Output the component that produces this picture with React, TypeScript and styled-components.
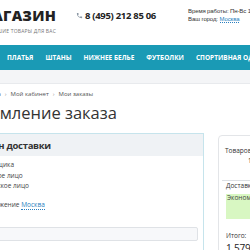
import styled, { createGlobalStyle } from 'styled-components';

const GlobalStyle = createGlobalStyle`
  html, body {
    margin: 0;
    padding: 0;
    overflow: hidden;
    background: #fff;
  }
  body {
    font-family: "Open Sans", "Liberation Sans", sans-serif;
    color: #333;
  }
`;

const Page = styled.div`
  width: 460px;
  margin-left: -60px;
`;

const Header = styled.header`
  display: flex;
  align-items: center;
  height: 45px;
`;

const Logo = styled.div`
  display: flex;
  flex-direction: column;
  align-items: flex-end;
  width: 116px;
  padding-right: 20px;
  margin-top: -2px;
`;

const LogoTitle = styled.div`
  font-size: 14.5px;
  font-weight: 800;
  line-height: 14px;
  color: #222;
  letter-spacing: 0.2px;
`;

const LogoTagline = styled.div`
  margin-top: 5px;
  font-size: 5px;
  line-height: 6px;
  color: #777;
  text-transform: uppercase;
  letter-spacing: 0.2px;
`;

const Phone = styled.div`
  display: flex;
  align-items: center;
  gap: 2px;
  width: 112px;
  margin-top: -14px;
  font-size: 9.5px;
  font-weight: 700;
  color: #222;
  letter-spacing: -0.3px;
`;

const Info = styled.div`
  margin-top: -14px;
  font-family: "Liberation Sans", sans-serif;
  font-size: 6px;
  line-height: 7.5px;
  letter-spacing: -0.1px;
  color: #333;
  white-space: nowrap;
`;

const CityLink = styled.span`
  color: #2b7fc0;
  border-bottom: 1px dotted #2b7fc0;
`;

const Nav = styled.nav`
  display: flex;
  align-items: center;
  gap: 12px;
  height: 25px;
  padding-left: 67px;
  background: #1a9ab5;
`;

const NavItem = styled.span`
  font-size: 6.5px;
  font-weight: 700;
  color: #fff;
  text-transform: uppercase;
  white-space: nowrap;
`;

const SubBar = styled.div`
  height: 13px;
  background: #f4f5f7;
  border-bottom: 1px solid #e8eaed;
`;

const Content = styled.main`
  padding-left: 8px;
`;

const Crumbs = styled.div`
  display: flex;
  gap: 4px;
  margin-top: 6px;
  font-size: 6px;
  line-height: 8px;
  color: #555;
  white-space: nowrap;
`;

const CrumbSep = styled.span`
  color: #999;
`;

const Title = styled.h1`
  margin: 4px 0 0;
  padding-left: 7px;
  font-size: 16.5px;
  font-weight: 400;
  line-height: 22px;
  color: #333;
  white-space: nowrap;
`;

const Columns = styled.div`
  display: flex;
  gap: 14px;
  margin-top: 9px;
  align-items: flex-start;
`;

const OrderBox = styled.section`
  width: 254px;
  height: 140px;
  border: 1px solid #c6e4ec;
  flex-shrink: 0;
`;

const BoxHeader = styled.div`
  height: 22px;
  display: flex;
  align-items: center;
  padding-left: 22px;
  background: #eff2f5;
  font-size: 9.5px;
  font-weight: 700;
  letter-spacing: -0.3px;
  color: #333;
  white-space: nowrap;
`;

const BoxBody = styled.div`
  padding: 4px 6px 0 3px;
`;

const Line = styled.div<{ $indent?: number }>`
  font-size: 6.5px;
  line-height: 10.5px;
  color: #444;
  padding-left: ${(p) => p.$indent ?? 0}px;
  white-space: nowrap;
`;

const Gap = styled.div`
  height: 8px;
`;

const Field = styled.div`
  margin-top: 17px;
  height: 12px;
  width: 244px;
  background: #f7f8fa;
  border: 1px solid #dfe2e6;
  border-radius: 2px;
`;

const SummaryCard = styled.aside`
  width: 140px;
  height: 130px;
  margin-top: 2px;
  border: 1px solid #e3e5e8;
  border-radius: 4px;
  padding-top: 10px;
  flex-shrink: 0;
`;

const SummaryRow = styled.div<{ $pad: number }>`
  padding-left: ${(p) => p.$pad}px;
  font-size: 6.5px;
  line-height: 10px;
  color: #333;
  white-space: nowrap;
`;

const Divider = styled.div`
  margin: 14px 0 0 3px;
  border-top: 1px solid #dcdfe3;
`;

const DeliveryOption = styled.div`
  margin: 3px 0 0 7px;
  height: 25px;
  background: #d8f7c2;
  font-size: 6.5px;
  line-height: 8px;
  color: #444;
  padding-left: 1px;
  white-space: nowrap;
`;

const TotalLabel = styled.div`
  margin: 13px 0 0 7px;
  font-size: 6.5px;
  line-height: 8px;
  color: #333;
`;

const TotalValue = styled.div`
  margin: 2px 0 0 7px;
  font-size: 10px;
  line-height: 12px;
  letter-spacing: -0.2px;
  color: #222;
  white-space: nowrap;
`;

const PhoneIcon = () => (
  <svg width="7" height="7" viewBox="0 0 24 24" fill="#8a96a3">
    <path d="M6.6 10.8c1.4 2.8 3.8 5.1 6.6 6.6l2.2-2.2c.3-.3.7-.4 1-.2 1.1.4 2.3.6 3.6.6.6 0 1 .4 1 1V20c0 .6-.4 1-1 1C10.6 21 3 13.4 3 4c0-.6.4-1 1-1h3.5c.6 0 1 .4 1 1 0 1.3.2 2.5.6 3.6.1.3 0 .7-.2 1L6.6 10.8z" />
  </svg>
);

const navItems = ['Платья', 'Штаны', 'Нижнее белье', 'Футболки', 'Спортивная одежда'];

export default function App() {
  return (
    <Page>
      <GlobalStyle />
      <Header>
        <Logo>
          <LogoTitle>МАГАЗИН</LogoTitle>
          <LogoTagline>Лучшие товары для вас</LogoTagline>
        </Logo>
        <Phone>
          <PhoneIcon />
          8 (495) 212 85 06
        </Phone>
        <Info>
          Время работы: Пн-Вс 10:00 - 20:00
          <br />
          Ваш город: <CityLink>Москва</CityLink>
        </Info>
      </Header>
      <Nav>
        {navItems.map((item) => (
          <NavItem key={item}>{item}</NavItem>
        ))}
      </Nav>
      <SubBar />
      <Content>
        <Crumbs>
          <span>Главная страница</span>
          <CrumbSep>›</CrumbSep>
          <span>Мой кабинет</span>
          <CrumbSep>›</CrumbSep>
          <span>Мои заказы</span>
        </Crumbs>
        <Title>Оформление заказа</Title>
        <Columns>
          <OrderBox>
            <BoxHeader>Регион доставки</BoxHeader>
            <BoxBody>
              <Line $indent={6}>Тип плательщика</Line>
              <Line $indent={15}>Физическое лицо</Line>
              <Line $indent={15}>Юридическое лицо</Line>
              <Gap />
              <Line $indent={12}>
                Местоположение <CityLink>Москва</CityLink>
              </Line>
              <Field />
            </BoxBody>
          </OrderBox>
          <SummaryCard>
            <SummaryRow $pad={6}>Товаров на:</SummaryRow>
            <SummaryRow $pad={29}>1 579 руб.</SummaryRow>
            <Divider />
            <SummaryRow $pad={7}>Доставка:</SummaryRow>
            <DeliveryOption>Экономичная</DeliveryOption>
            <TotalLabel>Итого:</TotalLabel>
            <TotalValue>1 579 руб.</TotalValue>
          </SummaryCard>
        </Columns>
      </Content>
    </Page>
  );
}
